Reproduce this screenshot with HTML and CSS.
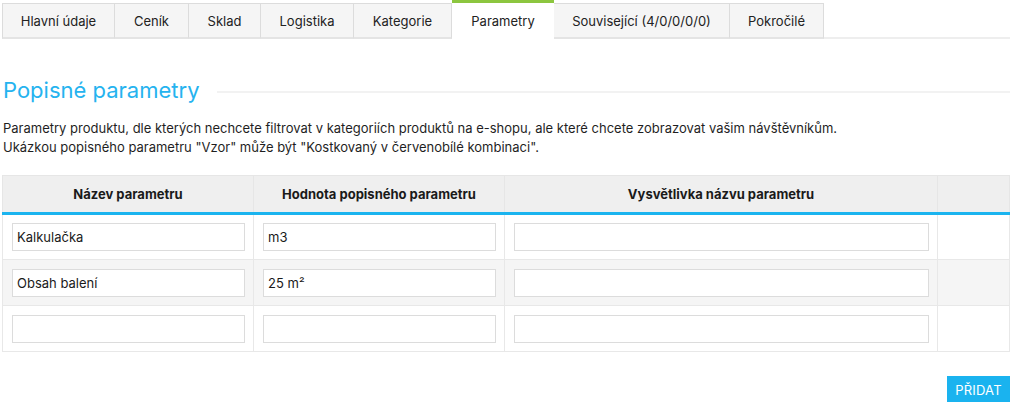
FILE: index.html
```html
<!DOCTYPE html>
<html lang="cs">
<head>
<meta charset="utf-8">
<title>Parametry</title>
<link rel="stylesheet" href="styles.css">
</head>
<body>
<div class="page">
  <nav class="tabs">
    <a class="tab t1">Hlavní údaje</a>
    <a class="tab t2">Ceník</a>
    <a class="tab t3">Sklad</a>
    <a class="tab t4">Logistika</a>
    <a class="tab t5">Kategorie</a>
    <a class="tab t6 active">Parametry</a>
    <a class="tab t7">Související (4/0/0/0/0)</a>
    <a class="tab t8">Pokročilé</a>
    <span class="tabs-rest"></span>
  </nav>

  <div class="heading">
    <h2>Popisné parametry</h2>
    <span class="heading-line"></span>
  </div>

  <p class="intro">Parametry produktu, dle kterých nechcete filtrovat v kategoriích produktů na e-shopu, ale které chcete zobrazovat vašim návštěvníkům.<br>Ukázkou popisného parametru "Vzor" může být "Kostkovaný v červenobílé kombinaci".</p>

  <table class="params">
    <colgroup>
      <col class="c1"><col class="c2"><col class="c3"><col class="c4">
    </colgroup>
    <thead>
      <tr>
        <th>Název parametru</th>
        <th>Hodnota popisného parametru</th>
        <th>Vysvětlivka názvu parametru</th>
        <th></th>
      </tr>
    </thead>
    <tbody>
      <tr>
        <td><input type="text" value="Kalkulačka"></td>
        <td><input type="text" value="m3"></td>
        <td><input type="text" value=""></td>
        <td></td>
      </tr>
      <tr class="alt">
        <td><input type="text" value="Obsah balení"></td>
        <td><input type="text" value="25 m²"></td>
        <td><input type="text" value=""></td>
        <td></td>
      </tr>
      <tr>
        <td><input type="text" value=""></td>
        <td><input type="text" value=""></td>
        <td><input type="text" value=""></td>
        <td></td>
      </tr>
    </tbody>
  </table>

  <div class="actions">
    <button class="btn-add" type="button">PŘIDAT</button>
  </div>
</div>
</body>
</html>
```

FILE: styles.css
```css
* { box-sizing: border-box; }

html, body {
  margin: 0;
  padding: 0;
  background: #fff;
}

body {
  font-family: Inter, "Noto Sans", "Liberation Sans", sans-serif;
  font-size: 13px;
  color: #222;
}

.page {
  width: 1010px;
  padding-left: 2px;
}

/* Tabs */
.tabs {
  display: flex;
  align-items: flex-end;
  height: 39px;
}

.tab {
  display: flex;
  align-items: center;
  justify-content: center;
  height: 36px;
  background: #f5f5f5;
  border: 1px solid #dcdcdc;
  border-left: none;
  border-bottom: 2px solid #e4e4e4;
  color: #222;
  font-size: 13px;
  white-space: nowrap;
}

.t1 { width: 113px; border-left: 1px solid #dcdcdc; }
.t2 { width: 74px; }
.t3 { width: 72px; }
.t4 { width: 93px; }
.t5 { width: 98px; }
.t6 { width: 102px; }
.t7 { width: 176px; }
.t8 { width: 94px; }

.tab.active {
  height: 39px;
  background: #fff;
  border: none;
  border-top: 3px solid #8cc63f;
  padding-bottom: 1px;
}

.tabs-rest {
  flex: 1;
  border-bottom: 2px solid #eeeeee;
  height: 2px;
}

/* Heading */
.heading {
  display: flex;
  align-items: center;
  gap: 17px;
  margin-top: 36px;
  height: 30px;
}

.heading h2 {
  margin: 0;
  font-weight: 400;
  font-size: 22px;
  color: #25b3ef;
  line-height: 30px;
  padding-left: 1px;
}

.heading-line {
  flex: 1;
  height: 2px;
  background: #f2f2f2;
  margin-top: 4px;
}

.intro {
  margin: 14px 0 0;
  padding-left: 1px;
  font-size: 13px;
  line-height: 19px;
  color: #1f1f1f;
}

/* Table */
.params {
  margin-top: 18px;
  width: 1007px;
  border-collapse: collapse;
  table-layout: fixed;
}

.c1 { width: 251px; }
.c2 { width: 251px; }
.c3 { width: 433px; }
.c4 { width: 72px; }

.params th {
  height: 38px;
  background: #efefef;
  border: 1px solid #e6e6e6;
  border-bottom: 3px solid #1bb4ef;
  font-weight: 700;
  font-size: 13px;
  color: #1a1a1a;
  text-align: center;
  padding: 0;
}

.params td {
  height: 46px;
  border: 1px solid #e8e8e8;
  padding: 0 8px 0 9px;
  vertical-align: middle;
}

.params tr.alt td {
  background: #f5f5f5;
}

.params input {
  display: block;
  width: 100%;
  height: 28px;
  border: 1px solid #dcdcdc;
  border-radius: 0;
  background: #fff;
  padding: 0 4px;
  font-family: inherit;
  font-size: 13px;
  color: #1a1a1a;
  outline: none;
}

/* Actions */
.actions {
  display: flex;
  justify-content: flex-end;
  margin-top: 24px;
}

.btn-add {
  width: 63px;
  height: 28px;
  border: none;
  background: #1ab3ef;
  color: #fff;
  font-family: inherit;
  font-size: 13px;
  letter-spacing: 0.2px;
  padding: 0;
  cursor: pointer;
}
```
